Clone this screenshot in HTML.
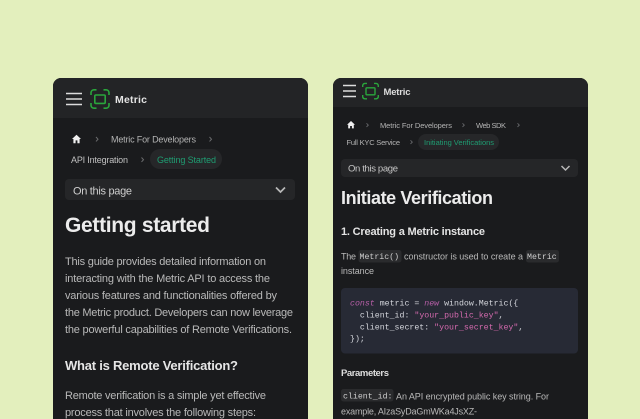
<!DOCTYPE html>
<html><head><meta charset="utf-8"><style>
html,body{margin:0;padding:0;background:#e3efbd;width:640px;height:419px;overflow:hidden}
svg{display:block;filter:blur(.3px)}
text{font-family:"Liberation Sans",sans-serif;white-space:pre}
.m{font-family:"Liberation Mono",monospace}
</style></head><body>
<svg width="640" height="419" viewBox="0 0 640 419" xmlns="http://www.w3.org/2000/svg">
<rect x="-5" y="-5" width="650" height="429" fill="#e3efbd"/>

<!-- LEFT CARD -->
<path d="M53 425V86a8 8 0 0 1 8-8H300a8 8 0 0 1 8 8V425Z" fill="#1a1b1d"/>
<path d="M53 118V86a8 8 0 0 1 8-8H300a8 8 0 0 1 8 8V118Z" fill="#232426"/>
<path d="M66 93.500H82M66 99H82M66 104.500H82" stroke="#dcdcdc" stroke-width="1.500" fill="none"/>
<g fill="none" stroke="#2aa63c" stroke-width="1.600">
<path d="M91 95V92.500A3 3 0 0 1 94 89.800H96.500M103.500 89.800H106A3 3 0 0 1 109 92.500V95M109 103V105.500A3 3 0 0 1 106 108.200H103.500M96.500 108.200H94A3 3 0 0 1 91 105.500V103"/>
<rect x="94.800" y="95" width="10.400" height="8.400" rx="1"/>
</g>
<text x="115" y="103" font-size="10.500" font-weight="700" fill="#e4e4e4" textLength="32">Metric</text>
<path d="M76.500 134.800L72 139H73.400V143.200H75.600V140.400H77.400V143.200H79.600V139H81Z" fill="#f0f0f0"/>
<path d="M96 137L98 139.200L96 141.400M209.500 137L211.500 139.200L209.500 141.400M141.500 157.500L143.500 159.700L141.500 161.900" stroke="#6a6b6d" stroke-width="1" fill="none"/>
<text x="111" y="142.500" font-size="9" fill="#b4b4b4" textLength="85">Metric For Developers</text>
<text x="71" y="163" font-size="9" fill="#c0c0c0" textLength="57">API Integration</text>
<rect x="150" y="149" width="72" height="20" rx="10" fill="#262729"/>
<text x="157" y="163" font-size="9" fill="#1f9d72" textLength="59">Getting Started</text>
<rect x="65" y="179" width="230" height="21" rx="4" fill="#252628"/>
<text x="73" y="194.500" font-size="11" fill="#cfcfcf" textLength="59">On this page</text>
<path d="M276 187.500L280.500 192L285 187.500" stroke="#b8b8b8" stroke-width="1.700" fill="none"/>
<text x="65" y="232" font-size="21" font-weight="700" fill="#ececec" textLength="145">Getting started</text>
<g font-size="11" fill="#b9b9b9">
<text x="65" y="265" textLength="201">This guide provides detailed information on</text>
<text x="65" y="282" textLength="205">interacting with the Metric API to access the</text>
<text x="65" y="299" textLength="212">various features and functionalities offered by</text>
<text x="65" y="316" textLength="228">the Metric product. Developers can now leverage</text>
<text x="65" y="333" textLength="227">the powerful capabilities of Remote Verifications.</text>
<text x="65" y="399" textLength="201">Remote verification is a simple yet effective</text>
<text x="65" y="416" textLength="191">process that involves the following steps:</text>
</g>
<text x="65" y="370" font-size="13" font-weight="700" fill="#e6e6e6" textLength="173">What is Remote Verification?</text>

<!-- RIGHT CARD -->
<path d="M333 425V86a8 8 0 0 1 8-8H580a8 8 0 0 1 8 8V425Z" fill="#1a1b1d"/>
<path d="M333 107V86a8 8 0 0 1 8-8H580a8 8 0 0 1 8 8V107Z" fill="#232426"/>
<path d="M343 85.500H356M343 91H356M343 96.500H356" stroke="#dcdcdc" stroke-width="1.400" fill="none"/>
<g fill="none" stroke="#2aa63c" stroke-width="1.400">
<path d="M362.700 87V85.500A2.500 2.500 0 0 1 365.200 83.400H367M374 83.400H376A2.500 2.500 0 0 1 378.300 85.500V87M378.300 95V97A2.500 2.500 0 0 1 376 98.800H374M367 98.800H365.200A2.500 2.500 0 0 1 362.700 97V95"/>
<rect x="366" y="87.800" width="9" height="7" rx="0.800"/>
</g>
<text x="383.500" y="95" font-size="9.500" font-weight="700" fill="#dcdcdc" textLength="27">Metric</text>
<path d="M351 121L347 124.700H348.200V128.400H350.100V126H351.900V128.400H353.800V124.700H355Z" fill="#f0f0f0"/>
<path d="M366.500 123.300L368.300 125.100L366.500 126.900M462.500 123.300L464.300 125.100L462.500 126.900M517.500 123.300L519.300 125.100L517.500 126.900M410.500 140.300L412.300 142.100L410.500 143.900" stroke="#66676a" stroke-width="0.900" fill="none"/>
<g font-size="7.500" fill="#b4b4b4">
<text x="380" y="128" textLength="72">Metric For Developers</text>
<text x="476" y="128" textLength="30">Web SDK</text>
<text x="346.500" y="145" textLength="53.500">Full KYC Service</text>
</g>
<rect x="418" y="134" width="81" height="16" rx="8" fill="#262729"/>
<text x="424" y="145" font-size="7.500" fill="#1f9d72" textLength="70">Initiating Verifications</text>
<rect x="341" y="159" width="237" height="18" rx="4" fill="#252628"/>
<text x="348" y="171.500" font-size="9.500" fill="#c6c6c6" textLength="50">On this page</text>
<path d="M561.500 166L565.500 170L569.500 166" stroke="#b8b8b8" stroke-width="1.500" fill="none"/>
<text x="341" y="204" font-size="18" font-weight="700" fill="#ececec" textLength="152">Initiate Verification</text>
<text x="341" y="235" font-size="11" font-weight="700" fill="#e4e4e4" textLength="144">1. Creating a Metric instance</text>

<rect x="358.500" y="250" width="43" height="12.500" rx="2.500" fill="#2a2b2d"/>
<rect x="526" y="250" width="33" height="12.500" rx="2.500" fill="#2a2b2d"/>
<g font-size="9" fill="#b9b9b9">
<text x="341" y="259.500" textLength="15">The</text>
<text x="404" y="259.500" textLength="119">constructor is used to create a</text>
<text x="341" y="274" textLength="33">instance</text>
<text x="396" y="399.500" textLength="153">An API encrypted public key string. For</text>
<text x="341" y="414.500" textLength="136">example, AIzaSyDaGmWKa4JsXZ-</text>
</g>
<text class="m" x="359.500" y="259.200" font-size="8.250" fill="#cfcfcf">Metric()</text>
<text class="m" x="527" y="259.200" font-size="8.250" fill="#cfcfcf">Metric</text>

<rect x="341" y="288" width="237" height="65.500" rx="4" fill="#272a35"/>
<g font-size="8.250" fill="#d4d6dc">
<text class="m" x="350" y="305.500"><tspan font-style="italic" fill="#b85fa8">const</tspan> metric = <tspan font-style="italic" fill="#b85fa8">new</tspan> window.Metric({</text>
<text class="m" x="350" y="317.500">  client_id: <tspan fill="#d46aae">"your_public_key"</tspan>,</text>
<text class="m" x="350" y="329.500">  client_secret: <tspan fill="#d46aae">"your_secret_key"</tspan>,</text>
<text class="m" x="350" y="341">});</text>
</g>

<text x="341" y="376" font-size="9.500" font-weight="700" fill="#dedede" textLength="48">Parameters</text>
<rect x="341" y="389" width="52.500" height="12.500" rx="2.500" fill="#2a2b2d"/>
<text class="m" x="343" y="398.500" font-size="8.250" fill="#cfcfcf">client_id:</text>
</svg>
</body></html>
